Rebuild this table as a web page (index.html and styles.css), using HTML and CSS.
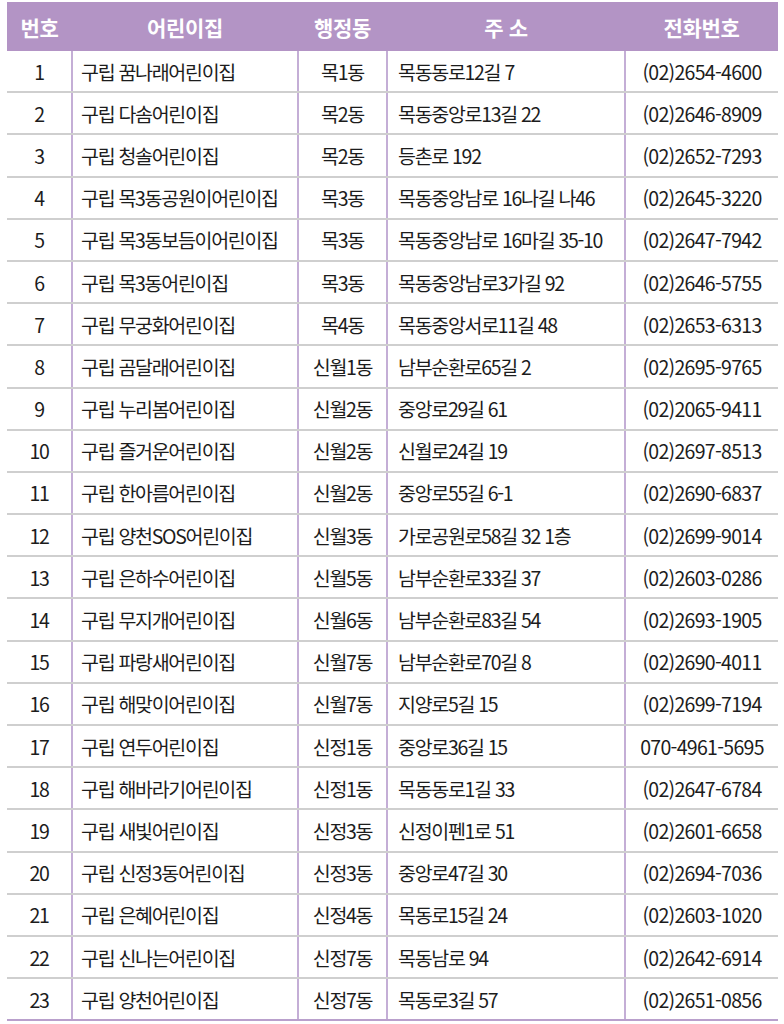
FILE: index.html
```html
<!DOCTYPE html>
<html lang="ko">
<head>
<meta charset="utf-8">
<link rel="stylesheet" href="styles.css">
</head>
<body>
<div class="wrap">
<table class="list">
<colgroup><col class="c1"><col class="c2"><col class="c3"><col class="c4"><col class="c5"></colgroup>
<thead>
<tr><th>번호</th><th>어린이집</th><th>행정동</th><th>주 소</th><th>전화번호</th></tr>
</thead>
<tbody>
<tr><td class="num">1</td><td class="name">구립 꿈나래어린이집</td><td class="dong">목1동</td><td class="addr">목동동로12길 7</td><td class="tel">(02)2654-4600</td></tr>
<tr><td class="num">2</td><td class="name">구립 다솜어린이집</td><td class="dong">목2동</td><td class="addr">목동중앙로13길 22</td><td class="tel">(02)2646-8909</td></tr>
<tr><td class="num">3</td><td class="name">구립 청솔어린이집</td><td class="dong">목2동</td><td class="addr">등촌로 192</td><td class="tel">(02)2652-7293</td></tr>
<tr><td class="num">4</td><td class="name">구립 목3동공원이어린이집</td><td class="dong">목3동</td><td class="addr">목동중앙남로 16나길 나46</td><td class="tel">(02)2645-3220</td></tr>
<tr><td class="num">5</td><td class="name">구립 목3동보듬이어린이집</td><td class="dong">목3동</td><td class="addr">목동중앙남로 16마길 35-10</td><td class="tel">(02)2647-7942</td></tr>
<tr><td class="num">6</td><td class="name">구립 목3동어린이집</td><td class="dong">목3동</td><td class="addr">목동중앙남로3가길 92</td><td class="tel">(02)2646-5755</td></tr>
<tr><td class="num">7</td><td class="name">구립 무궁화어린이집</td><td class="dong">목4동</td><td class="addr">목동중앙서로11길 48</td><td class="tel">(02)2653-6313</td></tr>
<tr><td class="num">8</td><td class="name">구립 곰달래어린이집</td><td class="dong">신월1동</td><td class="addr">남부순환로65길 2</td><td class="tel">(02)2695-9765</td></tr>
<tr><td class="num">9</td><td class="name">구립 누리봄어린이집</td><td class="dong">신월2동</td><td class="addr">중앙로29길 61</td><td class="tel">(02)2065-9411</td></tr>
<tr><td class="num">10</td><td class="name">구립 즐거운어린이집</td><td class="dong">신월2동</td><td class="addr">신월로24길 19</td><td class="tel">(02)2697-8513</td></tr>
<tr><td class="num">11</td><td class="name">구립 한아름어린이집</td><td class="dong">신월2동</td><td class="addr">중앙로55길 6-1</td><td class="tel">(02)2690-6837</td></tr>
<tr><td class="num">12</td><td class="name">구립 양천SOS어린이집</td><td class="dong">신월3동</td><td class="addr">가로공원로58길 32 1층</td><td class="tel">(02)2699-9014</td></tr>
<tr><td class="num">13</td><td class="name">구립 은하수어린이집</td><td class="dong">신월5동</td><td class="addr">남부순환로33길 37</td><td class="tel">(02)2603-0286</td></tr>
<tr><td class="num">14</td><td class="name">구립 무지개어린이집</td><td class="dong">신월6동</td><td class="addr">남부순환로83길 54</td><td class="tel">(02)2693-1905</td></tr>
<tr><td class="num">15</td><td class="name">구립 파랑새어린이집</td><td class="dong">신월7동</td><td class="addr">남부순환로70길 8</td><td class="tel">(02)2690-4011</td></tr>
<tr><td class="num">16</td><td class="name">구립 해맞이어린이집</td><td class="dong">신월7동</td><td class="addr">지양로5길 15</td><td class="tel">(02)2699-7194</td></tr>
<tr><td class="num">17</td><td class="name">구립 연두어린이집</td><td class="dong">신정1동</td><td class="addr">중앙로36길 15</td><td class="tel">070-4961-5695</td></tr>
<tr><td class="num">18</td><td class="name">구립 해바라기어린이집</td><td class="dong">신정1동</td><td class="addr">목동동로1길 33</td><td class="tel">(02)2647-6784</td></tr>
<tr><td class="num">19</td><td class="name">구립 새빛어린이집</td><td class="dong">신정3동</td><td class="addr">신정이펜1로 51</td><td class="tel">(02)2601-6658</td></tr>
<tr><td class="num">20</td><td class="name">구립 신정3동어린이집</td><td class="dong">신정3동</td><td class="addr">중앙로47길 30</td><td class="tel">(02)2694-7036</td></tr>
<tr><td class="num">21</td><td class="name">구립 은혜어린이집</td><td class="dong">신정4동</td><td class="addr">목동로15길 24</td><td class="tel">(02)2603-1020</td></tr>
<tr><td class="num">22</td><td class="name">구립 신나는어린이집</td><td class="dong">신정7동</td><td class="addr">목동남로 94</td><td class="tel">(02)2642-6914</td></tr>
<tr><td class="num">23</td><td class="name">구립 양천어린이집</td><td class="dong">신정7동</td><td class="addr">목동로3길 57</td><td class="tel">(02)2651-0856</td></tr>
</tbody>
</table>
</div>
</body>
</html>
```
FILE: styles.css
```css
html, body {
  margin: 0;
  padding: 0;
  background: #ffffff;
}
body {
  font-family: "Noto Sans CJK KR", "Noto Sans", sans-serif;
  color: #1c1c1c;
}
.wrap {
  padding: 2px 0 0 7px;
}
.list {
  width: 771px;
  border-collapse: collapse;
  table-layout: fixed;
}
.c1 { width: 65px; }
.c2 { width: 226px; }
.c3 { width: 89px; }
.c4 { width: 238px; }
.c5 { width: 153px; }
.list th {
  background: #b394c5;
  color: #ffffff;
  font-weight: 700;
  font-size: 21px;
  height: 49px;
  padding: 0;
  letter-spacing: -0.3px;
  text-align: center;
}
.list td {
  height: 40.2px;
  padding: 0;
  font-size: 19.5px;
  letter-spacing: -1.3px;
  white-space: nowrap;
  border-bottom: 2px solid #cfcfcf;
  border-left: 2px solid #c4aed6;
}
.list td.num {
  border-left: none;
  text-align: center;
}
.list tbody tr:last-child td {
  border-bottom: 2px solid #b9a0cc;
}
.name { padding-left: 8px !important; }
.dong { text-align: center; }
.addr { padding-left: 10px !important; }
.tel { text-align: center; letter-spacing: -0.7px !important; }
```
